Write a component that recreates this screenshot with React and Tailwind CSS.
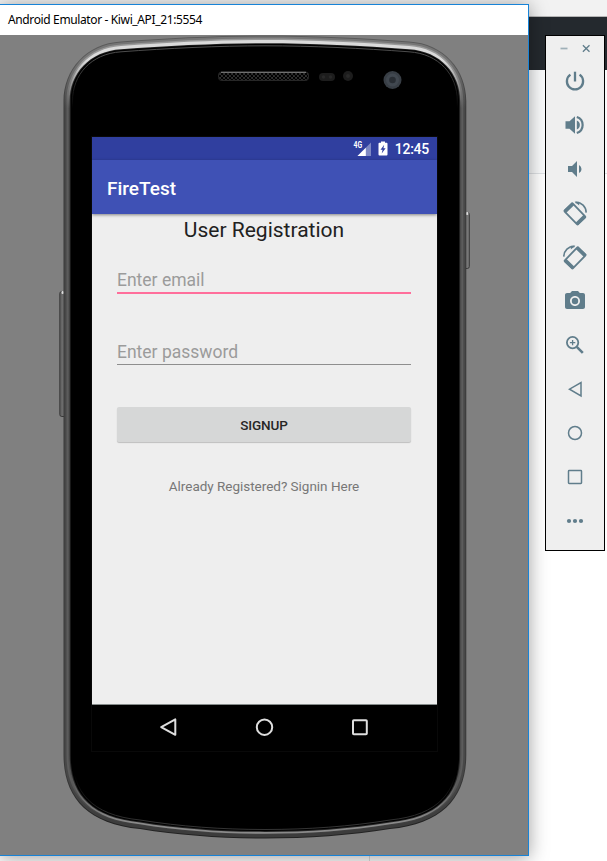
import { MdVolumeDown, MdPhotoCamera } from "react-icons/md";

// Outline of the handset, inset by the given amounts on its sides, top and bottom.
function outline(s, t = s, b = s) {
  const l = 63.5 + s;
  const r = 466.3 - s;
  const top = 35.5 + t;
  const bot = 838.5 - b;
  return `M${l} 101 C${l} ${70 + t * 0.5} ${86 + s * 0.5} ${43.5 + t} 121 ${41.5 + t} C168 ${38 + t} 218 ${top} 265 ${top} C312 ${top} 362 ${38 + t} 409 ${41.5 + t} C${444 - s * 0.5} ${43.5 + t} ${r} ${70 + t * 0.5} ${r} 101 V755 C${r} ${796 - b * 0.5} ${444 - s * 0.5} ${824 - b} 390 ${829 - b} C350 ${835.5 - b} 308 ${bot} 265 ${bot} C222 ${bot} 180 ${835.5 - b} 140 ${829 - b} C${86 + s * 0.5} ${824 - b} ${l} ${796 - b * 0.5} ${l} 755 Z`;
}

function Gradient({ id, top, side, bottom }) {
  return (
    <linearGradient id={id} gradientUnits="userSpaceOnUse" x1="0" y1="36" x2="0" y2="839">
      <stop offset="0" stopColor={top} />
      <stop offset="0.03" stopColor={top} />
      <stop offset="0.09" stopColor={side} />
      <stop offset="0.92" stopColor={side} />
      <stop offset="0.98" stopColor={bottom} />
    </linearGradient>
  );
}

function Handset() {
  return (
    <svg className="absolute left-0 top-0" width="528" height="820" viewBox="0 35 528 820">
      <defs>
        <Gradient id="rim" top="#5a5a5a" side="#3a3a3a" bottom="#222222" />
        <Gradient id="outerBand" top="#767676" side="#484848" bottom="#3c3c3c" />
        <Gradient id="midBand" top="#999999" side="#5c5c5c" bottom="#404040" />
        <Gradient id="shine" top="#dadada" side="#505050" bottom="#8a8a8a" />
        <Gradient id="lip" top="#4c4c4c" side="#000000" bottom="#343434" />
        <linearGradient id="key" x1="0" x2="1">
          <stop offset="0" stopColor="#5c5c5c" />
          <stop offset="1" stopColor="#858585" />
        </linearGradient>
        <pattern id="mesh" x="221" y="73" width="4" height="4" patternUnits="userSpaceOnUse">
          <rect width="4" height="4" fill="#303030" />
          <circle cx="1" cy="1" r="1.25" fill="#000" />
          <circle cx="3" cy="3" r="1.25" fill="#000" />
        </pattern>
      </defs>
      <rect x="59.8" y="291.5" width="7" height="125" rx="2" fill="url(#key)" stroke="#393939" />
      <rect x="61.5" y="291" width="2.5" height="3" rx="1" fill="#ddd" />
      <rect x="463" y="212.5" width="6.3" height="56" rx="2" fill="#777" stroke="#393939" />
      <rect x="465.8" y="212" width="2.5" height="3" rx="1" fill="#ddd" />
      <path d={outline(0)} fill="url(#rim)" />
      <path d={outline(1)} fill="url(#outerBand)" />
      <path d={outline(3, 3, 4)} fill="url(#midBand)" />
      <path d={outline(4.8, 4.5, 4.8)} fill="url(#shine)" />
      <path d={outline(6.2, 7.7, 6.6)} fill="#242424" />
      <path d={outline(7.2, 8.5, 7.4)} fill="#000" />
      <path d={outline(9, 10.3, 9)} fill="none" stroke="url(#lip)" strokeWidth="1" />

      <rect x="218.5" y="72" width="90" height="8.5" rx="3" fill="url(#mesh)" stroke="#272727" />
      <path d="M221 72.3h85" stroke="#858585" strokeWidth="1" />
      <rect x="319" y="73" width="16" height="8" rx="4" fill="#1d1d1d" />
      <circle cx="323.5" cy="77" r="1.8" fill="#292929" />
      <circle cx="330.5" cy="77" r="1.8" fill="#292929" />
      <circle cx="348" cy="76" r="5" fill="#1d1d1d" />
      <circle cx="348" cy="76" r="2" fill="#292929" />
      <circle cx="392.5" cy="80" r="9" fill="#383e45" />
      <circle cx="392.5" cy="80" r="6.5" fill="#414850" />
      <circle cx="392.5" cy="80" r="3.3" fill="#292e34" />
    </svg>
  );
}

function StatusBar() {
  return (
    <div className="flex h-[23px] shrink-0 items-center justify-end bg-[#303f9f] pr-2 text-white">
      <svg width="19" height="16" viewBox="0 0 19 16" className="mr-[6px]">
        <path d="M18 1.5V15H4.5Z" fill="#7e88c3" />
        <path d="M12.8 6.7V15H4.5Z" fill="#fff" />
        <path d="M0 0h9.5v8H0Z" fill="#303f9f" />
        <text x="0.5" y="7" fill="#fff" fontSize="8.5" fontWeight="700" fontFamily="Roboto, sans-serif" textLength="8.6" lengthAdjust="spacingAndGlyphs">4G</text>
      </svg>
      <svg width="10" height="15" viewBox="0 0 10 15" className="mr-[7px]">
        <path d="M3 0.5h4v1.3h1.6a.9.9 0 0 1 .9.9v10.9a.9.9 0 0 1-.9.9H1.4a.9.9 0 0 1-.9-.9V2.7a.9.9 0 0 1 .9-.9H3Z" fill="#fff" />
        <path d="M6.2 3.7L2.5 8.8h2.1l-.9 3.7 3.9-5.3H5.4Z" fill="#303f9f" />
      </svg>
      <span className="text-[14px] leading-none font-medium tracking-[-0.25px]">12:45</span>
    </div>
  );
}

function NavBar() {
  return (
    <div className="flex h-[47px] shrink-0 items-center justify-between border-t border-[#858b8a] bg-black pl-[67px] pr-[67px] pb-[2px]">
      <svg width="20" height="20" viewBox="0 0 20 20" fill="none" stroke="#dedede" strokeWidth="2" strokeLinejoin="round">
        <path d="M16.3 2.4V17.8L2.2 10.1Z" />
      </svg>
      <svg width="20" height="20" viewBox="0 0 20 20" fill="none" stroke="#dedede" strokeWidth="2">
        <circle cx="9.5" cy="10.2" r="7.7" />
      </svg>
      <svg width="20" height="20" viewBox="0 0 20 20" fill="none" stroke="#dedede" strokeWidth="2">
        <rect x="3" y="3.3" width="13.8" height="14" rx="0.8" />
      </svg>
    </div>
  );
}

function Screen() {
  return (
    <div className="relative mt-[102px] ml-[92px] flex h-[614px] w-[345px] flex-col bg-[#eeeeee] font-[Roboto,sans-serif] outline-1 outline-[#090909]">
      <StatusBar />
      <div className="z-10 flex h-[54px] shrink-0 items-center bg-[#3f51b5] pl-[15px] pt-[4px] text-[19px] font-medium text-white shadow-[0_1px_3px_rgba(0,0,0,0.45)]">
        <span>FireTest</span>
      </div>
      <div className="flex min-h-0 flex-1 flex-col pl-[25px] pr-[26px]">
        <h1 className="mt-[2px] h-7 text-center text-[21px] leading-7 text-[#212121]">User Registration</h1>
        <div className="mt-[22px] h-[28px] border-b-2 border-[#ff6e9b] text-[17.5px] leading-[28px] text-[#9b9b9b]">Enter email</div>
        <div className="mt-[43px] h-[28px] border-b border-[#8e8e8e] text-[17.5px] leading-[30px] text-[#9b9b9b]">Enter password</div>
        <button className="mt-[42px] h-[35px] shrink-0 rounded-[2px] bg-[#d6d7d7] pt-[2px] text-[13.5px] font-medium tracking-[-0.1px] text-[#262626] shadow-[0_1px_1px_rgba(0,0,0,0.2)]">
          SIGNUP
        </button>
        <p className="mt-[35px] text-center text-[13.5px] leading-[18px] tracking-[-0.02px] text-[#777777]">Already Registered? Signin Here</p>
      </div>
      <NavBar />
    </div>
  );
}

function Power() {
  return (
    <svg width="20" height="20" viewBox="0 0 20 20" fill="none" stroke="currentColor" strokeWidth="2.3">
      <path d="M10 0.7v9.8" />
      <path d="M5.4 3.6a8.1 8.1 0 1 0 9.2 0" />
    </svg>
  );
}

function VolumeUp() {
  return (
    <svg width="20" height="20" viewBox="0 0 20 20">
      <path d="M0.5 6.3h4L10 1.2v17.6L4.5 13.7h-4Z" fill="currentColor" />
      <path d="M11.8 5.6a4.7 4.7 0 0 1 0 8.8Z" fill="currentColor" />
      <path d="M11.8 2a8.4 8.4 0 0 1 0 16" fill="none" stroke="currentColor" strokeWidth="2.2" />
    </svg>
  );
}

function ZoomIn() {
  return (
    <svg width="20" height="20" viewBox="0 0 20 20" fill="none" stroke="currentColor">
      <circle cx="7.6" cy="7.6" r="5.7" strokeWidth="1.8" />
      <path d="M11.8 11.8l6 6" strokeWidth="2.6" />
      <path d="M7.6 4.9v5.4M4.9 7.6h5.4" strokeWidth="1.3" />
    </svg>
  );
}

function Rotate({ flip = false }) {
  return (
    <svg width="24" height="24" viewBox="0 0 24 24" fill="none" stroke="currentColor" overflow="visible" className={flip ? "-scale-x-100" : ""}>
      <g transform="translate(11.9 12.9) rotate(46)">
        <rect x="-9.6" y="-5.7" width="19.2" height="11.4" rx="0.8" strokeWidth="1.8" />
        <path d="M-8.6 -5.7v11.4M8.6 -5.7v11.4" strokeWidth="3.6" />
      </g>
      <path d="M12.5 1.4C18.6 1.2 23 5.4 23.2 11.6" strokeWidth="1.6" />
      <path d="M11.6 0.8h4.6v3.6Z" fill="currentColor" stroke="none" />
    </svg>
  );
}

function Toolbar() {
  return (
    <aside className="absolute left-[545px] top-[35px] flex h-[516px] w-[60px] flex-col items-center border border-black bg-[#efefef] text-[#607d8b]">
      <div className="flex h-[23px] w-full items-center justify-center gap-[13px] pt-[2px]">
        <svg width="9" height="9" viewBox="0 0 9 9"><path d="M0.5 4.5h7" stroke="#9fb0b8" strokeWidth="1.7" /></svg>
        <svg width="9" height="9" viewBox="0 0 9 9"><path d="M0.9 1.2l6.6 6.6M7.5 1.2L0.9 7.8" stroke="currentColor" strokeWidth="1.3" /></svg>
      </div>
      <div className="grid auto-rows-[44px] place-items-center">
        <Power />
        <VolumeUp />
        <MdVolumeDown className="h-6 w-6" />
        <Rotate />
        <Rotate flip />
        <MdPhotoCamera className="h-6 w-6" />
        <ZoomIn />
        <svg width="20" height="20" viewBox="0 0 20 20" fill="none" stroke="currentColor" strokeWidth="1.5"><path d="M16 3.5v13.4L4.5 10.2Z" /></svg>
        <svg width="20" height="20" viewBox="0 0 20 20" fill="none" stroke="currentColor" strokeWidth="1.5"><circle cx="10" cy="10" r="6.5" /></svg>
        <svg width="20" height="20" viewBox="0 0 20 20" fill="none" stroke="currentColor" strokeWidth="1.5"><rect x="3.5" y="3.5" width="13" height="13" rx="0.7" /></svg>
        <svg width="20" height="20" viewBox="0 0 20 20" fill="currentColor"><circle cx="4" cy="10" r="2.1" /><circle cx="10" cy="10" r="2.1" /><circle cx="16" cy="10" r="2.1" /></svg>
      </div>
    </aside>
  );
}

export default function App() {
  return (
    <main className="relative h-[861px] w-[607px] overflow-hidden bg-white">
      <div className="flex h-full flex-col">
        <div className="h-[17px] border-b border-[#b5b5b5] bg-[#f2f2f2]" />
        <div className="h-[53px] bg-[#24292e]" />
        <div className="h-[104px] border-b border-[#dfe2e5] bg-[#fafbfc]" />
        <div className="w-[370px] flex-1 border-r border-[#dddddd]" />
      </div>

      <section className="absolute left-[-1px] top-1 h-[852px] w-[530px] border border-[#1883d7] bg-[#808080] shadow-[0_2px_18px_rgba(0,0,0,0.38)]">
        <header className="flex h-[30px] items-center bg-white pl-2 font-['Noto_Sans','Open_Sans',sans-serif] text-[12px] text-black">
          <span className="whitespace-nowrap tracking-[-0.37px]">Android Emulator - Kiwi_API_21:5554</span>
        </header>
        <div className="relative flow-root h-[820px]">
          <Handset />
          <Screen />
        </div>
      </section>

      <Toolbar />
    </main>
  );
}
